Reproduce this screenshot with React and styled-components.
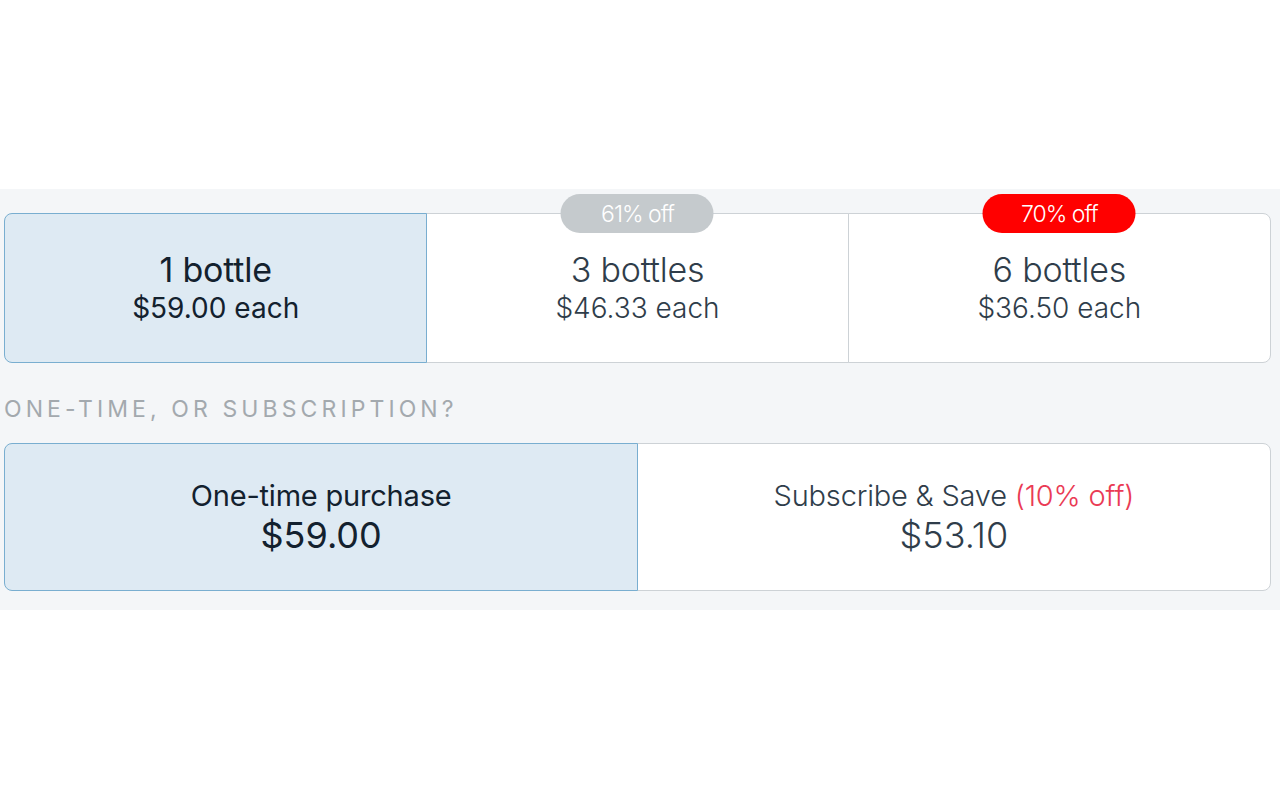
import React from "react";
import styled, { createGlobalStyle } from "styled-components";

const GlobalStyle = createGlobalStyle`
  html, body {
    margin: 0;
    padding: 0;
    background: #ffffff;
    font-family: Inter, "Liberation Sans", sans-serif;
  }
`;

const Page = styled.div`
  width: 1280px;
  height: 800px;
  display: flex;
  flex-direction: column;
  justify-content: center;
  box-sizing: border-box;
`;

const Band = styled.section`
  margin-top: -1px;
  background: #f4f6f8;
  padding: 24px 9px 19px 4px;
  display: flex;
  flex-direction: column;
`;

const Row = styled.div`
  display: flex;
  height: ${(p) => p.height}px;
`;

const Card = styled.div`
  flex: 1;
  position: relative;
  display: flex;
  flex-direction: column;
  align-items: center;
  justify-content: center;
  box-sizing: border-box;
  color: ${(p) => (p.active ? "#13212e" : "#2f3d4a")};
  background: ${(p) => (p.active ? "#deeaf3" : "#ffffff")};
  border: 1.5px solid ${(p) => (p.active ? "#79aed0" : "#cdd2d6")};
  z-index: ${(p) => (p.active ? 1 : 0)};
  margin-left: -1.5px;
  font-weight: ${(p) => (p.active ? 400 : 300)};

  &:first-child {
    margin-left: 0;
    border-radius: 8px 0 0 8px;
  }
  &:last-child {
    border-radius: 0 8px 8px 0;
  }
`;

const Title = styled.div`
  font-size: ${(p) => p.size}px;
  line-height: ${(p) => p.lh}px;
  letter-spacing: -0.2px;
`;

const Price = styled.div`
  font-size: ${(p) => p.size}px;
  line-height: ${(p) => p.lh}px;
  letter-spacing: 0px;
`;

const Badge = styled.span`
  position: absolute;
  top: -20px;
  left: 50%;
  transform: translateX(-50%);
  width: 153px;
  height: 39px;
  border-radius: 20px;
  background: ${(p) => p.color};
  color: #ffffff;
  font-size: 23px;
  font-weight: 300;
  letter-spacing: -1px;
  display: flex;
  align-items: center;
  justify-content: center;
`;

const Label = styled.div`
  margin: 33px 0 21px;
  font-size: 23px;
  line-height: 26px;
  letter-spacing: 4.1px;
  color: #a3a9ae;
  font-weight: 400;
`;

const Off = styled.span`
  color: #ea3b55;
`;

const bottles = [
  { title: "1 bottle", price: "$59.00 each", active: true },
  { title: "3 bottles", price: "$46.33 each", badge: "61% off", badgeColor: "#c5cacd" },
  { title: "6 bottles", price: "$36.50 each", badge: "70% off", badgeColor: "#ff0000" },
];

export default function App() {
  return (
    <>
      <GlobalStyle />
      <Page>
        <Band>
          <Row height={150}>
            {bottles.map((b) => (
              <Card key={b.title} active={b.active}>
                {b.badge && <Badge color={b.badgeColor}>{b.badge}</Badge>}
                <Title size={34} lh={40}>{b.title}</Title>
                <Price size={28} lh={36}>{b.price}</Price>
              </Card>
            ))}
          </Row>
          <Label>ONE-TIME, OR SUBSCRIPTION?</Label>
          <Row height={148}>
            <Card active>
              <Title size={29} lh={36}>One-time purchase</Title>
              <Price size={36} lh={42}>$59.00</Price>
            </Card>
            <Card>
              <Title size={29} lh={36}>
                Subscribe &amp; Save <Off>(10% off)</Off>
              </Title>
              <Price size={36} lh={42}>$53.10</Price>
            </Card>
          </Row>
        </Band>
      </Page>
    </>
  );
}
